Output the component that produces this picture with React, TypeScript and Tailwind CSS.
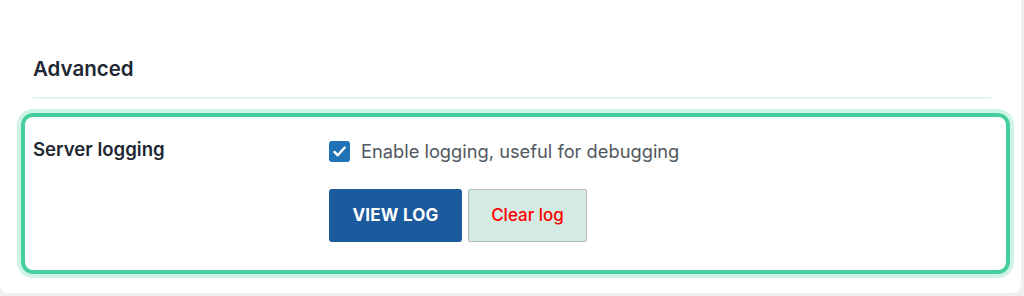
import React from "react";

export default function App() {
  return (
    <div
      className="w-[1024px] h-[296px] bg-[#f0f0f1] overflow-hidden"
      style={{ fontFamily: "Inter, 'Noto Sans', 'Liberation Sans', sans-serif" }}
    >
      <div className="w-[1021px] h-[293px] bg-white rounded-b-[8px] pl-[33px] pr-[30px]">
        <h2 className="pt-[55px] text-[20.5px] leading-[28px] font-semibold text-[#1e2733]">
          Advanced
        </h2>
        <div className="mt-[14px] h-[2px] bg-[#e1f4ee]" />
        <div className="mt-[14px] ml-[-12px] w-[989px] h-[161px] border-[4px] border-[#46cf9c] rounded-[12px] shadow-[0_0_0_4px_#cff3e4] flex pl-[8px] pt-[19px]">
          <div className="w-[296px] mt-[1px] text-[18.6px] leading-[24px] font-semibold text-[#1e2733]">
            Server logging
          </div>
          <div className="flex flex-col">
            <label className="flex items-center gap-[11px] mt-[3px]">
              <span className="w-[21px] h-[21px] rounded-[3px] bg-[#1f72b6] flex items-center justify-center">
                <svg width="15" height="15" viewBox="0 0 16 16" fill="none">
                  <path
                    d="M2.5 8.5 L6.2 12 L13.5 3.8"
                    stroke="white"
                    strokeWidth="2.6"
                    strokeLinecap="round"
                    strokeLinejoin="round"
                  />
                </svg>
              </span>
              <span className="text-[18.3px] leading-[24px] text-[#50575e]">
                Enable logging, useful for debugging
              </span>
            </label>
            <div className="flex gap-[6px] mt-[26px]">
              <button className="w-[133px] h-[53px] bg-[#1c5a9e] rounded-[3px] text-white font-bold text-[17px] tracking-[0.2px]">
                VIEW LOG
              </button>
              <button className="w-[119px] h-[53px] bg-[#d3ebe2] border border-[#b3bab8] rounded-[2px] text-[#ff0000] font-medium text-[17px]">
                Clear log
              </button>
            </div>
          </div>
        </div>
      </div>
    </div>
  );
}
